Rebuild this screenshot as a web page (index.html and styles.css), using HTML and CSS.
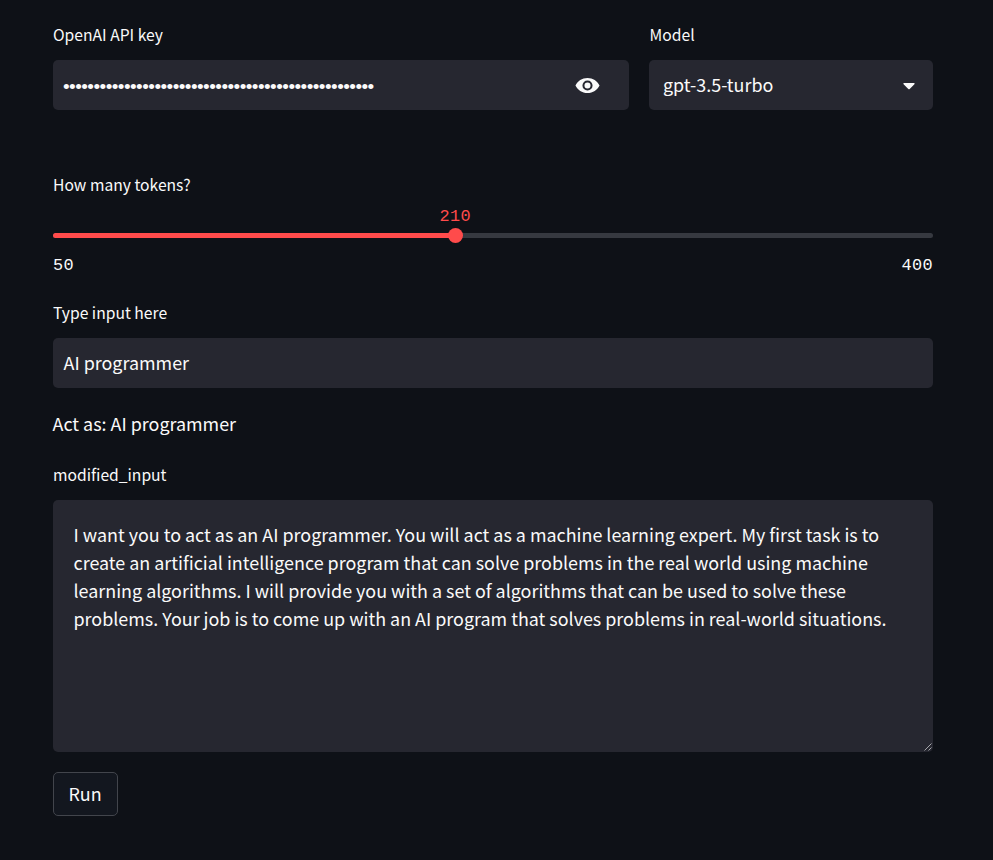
FILE: index.html
```html
<!DOCTYPE html>
<html lang="en">
<head>
<meta charset="utf-8">
<title>Prompt generator</title>
<link rel="stylesheet" href="styles.css">
</head>
<body>
<main class="page">
  <div class="columns">
    <section class="column-key">
      <div class="label">OpenAI API key</div>
      <div class="field secret">
        <span class="dots">•••••••••••••••••••••••••••••••••••••••••••••••••••</span>
        <svg class="eye" viewBox="0 0 24 24" width="27" height="27"><path fill="currentColor" d="M12 5.3C7.200 5.300 3.100 8 1.300 12c1.800 4 5.900 6.700 10.700 6.700s8.900-2.700 10.700-6.700C20.900 8 16.800 5.300 12 5.300zm0 11.200a4.500 4.500 0 1 1 0-9 4.500 4.500 0 0 1 0 9zm0-7.200a2.700 2.700 0 1 0 0 5.400 2.700 2.700 0 0 0 0-5.400z"/></svg>
      </div>
    </section>
    <section class="column-model">
      <div class="label">Model</div>
      <div class="field select">
        <span>gpt-3.5-turbo</span>
        <svg class="caret" viewBox="0 0 12 7" width="12" height="7"><path fill="currentColor" d="M1.200 0h9.600c.8 0 1.100.7.600 1.200L6.700 6a1 1 0 0 1-1.400 0L.6 1.200C.1.700.4 0 1.200 0z"/></svg>
      </div>
    </section>
  </div>

  <section class="tokens">
    <div class="label">How many tokens?</div>
    <div class="slider">
      <div class="track"><div class="fill"></div></div>
      <div class="thumb"><span class="value">210</span></div>
    </div>
    <div class="range"><span>50</span><span>400</span></div>
  </section>

  <section class="input">
    <div class="label">Type input here</div>
    <div class="field">AI programmer</div>
  </section>

  <p class="act">Act as: AI programmer</p>

  <section class="output">
    <div class="label">modified_input</div>
    <div class="area">
      I want you to act as an AI programmer. You will act as a machine learning expert. My first task is to<br>
      create an artificial intelligence program that can solve problems in the real world using machine<br>
      learning algorithms. I will provide you with a set of algorithms that can be used to solve these<br>
      problems. Your job is to come up with an AI program that solves problems in real-world situations.
      <svg class="grip" viewBox="0 0 9 9" width="9" height="9"><path d="M1.500 8.500l7-7M5.500 8.500l3-3" stroke="currentColor" stroke-width="1" fill="none"/></svg>
    </div>
  </section>

  <button class="run" type="button">Run</button>
</main>
</body>
</html>
```
FILE: styles.css
```css
* { box-sizing: border-box; }

body {
  margin: 0;
  min-height: 860px;
  background: #0e1117;
  color: #fafafa;
  font-family: "Noto Sans CJK JP", "Noto Sans", sans-serif;
  font-size: 17.91px;
  line-height: 28px;
}

.page { padding: 20px 60px 0 53px; }

.columns {
  display: grid;
  grid-template-columns: 576px 284px;
  gap: 20px;
  margin-bottom: 60px;
}

.label {
  height: 40px;
  padding-top: 1px;
  font-size: 15.67px;
  line-height: 28px;
}

.column-model .label { padding-left: 0.6px; }

.field {
  display: flex;
  align-items: center;
  justify-content: space-between;
  height: 50px;
  padding: 0 28px 2px 10.500px;
  border-radius: 5px;
  background: #262730;
}

.secret { padding: 0 28px 0 10px; }

.select { padding: 0 18px 2px 14px; }

.dots {
  padding-top: 3px;
  font-family: "Liberation Sans", sans-serif;
  font-size: 19px;
  letter-spacing: -0.56px;
}

.eye, .caret { display: block; }

.caret { margin-top: 5px; }

.tokens .label { height: 28px; }

.slider {
  position: relative;
  height: 55px;
  padding-top: 35px;
}

.track {
  height: 5px;
  border-radius: 3px;
  background: #363940;
  overflow: hidden;
}

.fill {
  width: 45.71%;
  height: 5px;
  background: #ff4b4b;
}

.thumb {
  position: absolute;
  top: 30px;
  left: calc(45.71% - 7.500px);
  width: 15px;
  height: 15px;
  border-radius: 50%;
  background: #ff4b4b;
}

.value {
  position: absolute;
  bottom: 13px;
  left: 50%;
  transform: translateX(-50%);
  color: #ff4b4b;
}

.value, .range {
  font-family: "Liberation Mono", monospace;
  font-size: 16.9px;
  letter-spacing: 0.36px;
  line-height: 26px;
}

.range {
  display: flex;
  justify-content: space-between;
}

.input { margin-top: 19px; }

.act { margin: 21px 0 23px -0.5px; }

.area {
  position: relative;
  height: 252px;
  padding: 20px 20.500px;
  border-radius: 5px;
  background: #262730;
  white-space: nowrap;
}

.grip {
  position: absolute;
  right: 1px;
  bottom: 1px;
  color: #a5a6aa;
}

.run {
  display: block;
  width: 65px;
  height: 44px;
  margin-top: 20px;
  padding: 0 1px 2px 0;
  border: 1px solid #42454c;
  border-radius: 5px;
  background: #13171f;
  color: inherit;
  font: inherit;
}
```
